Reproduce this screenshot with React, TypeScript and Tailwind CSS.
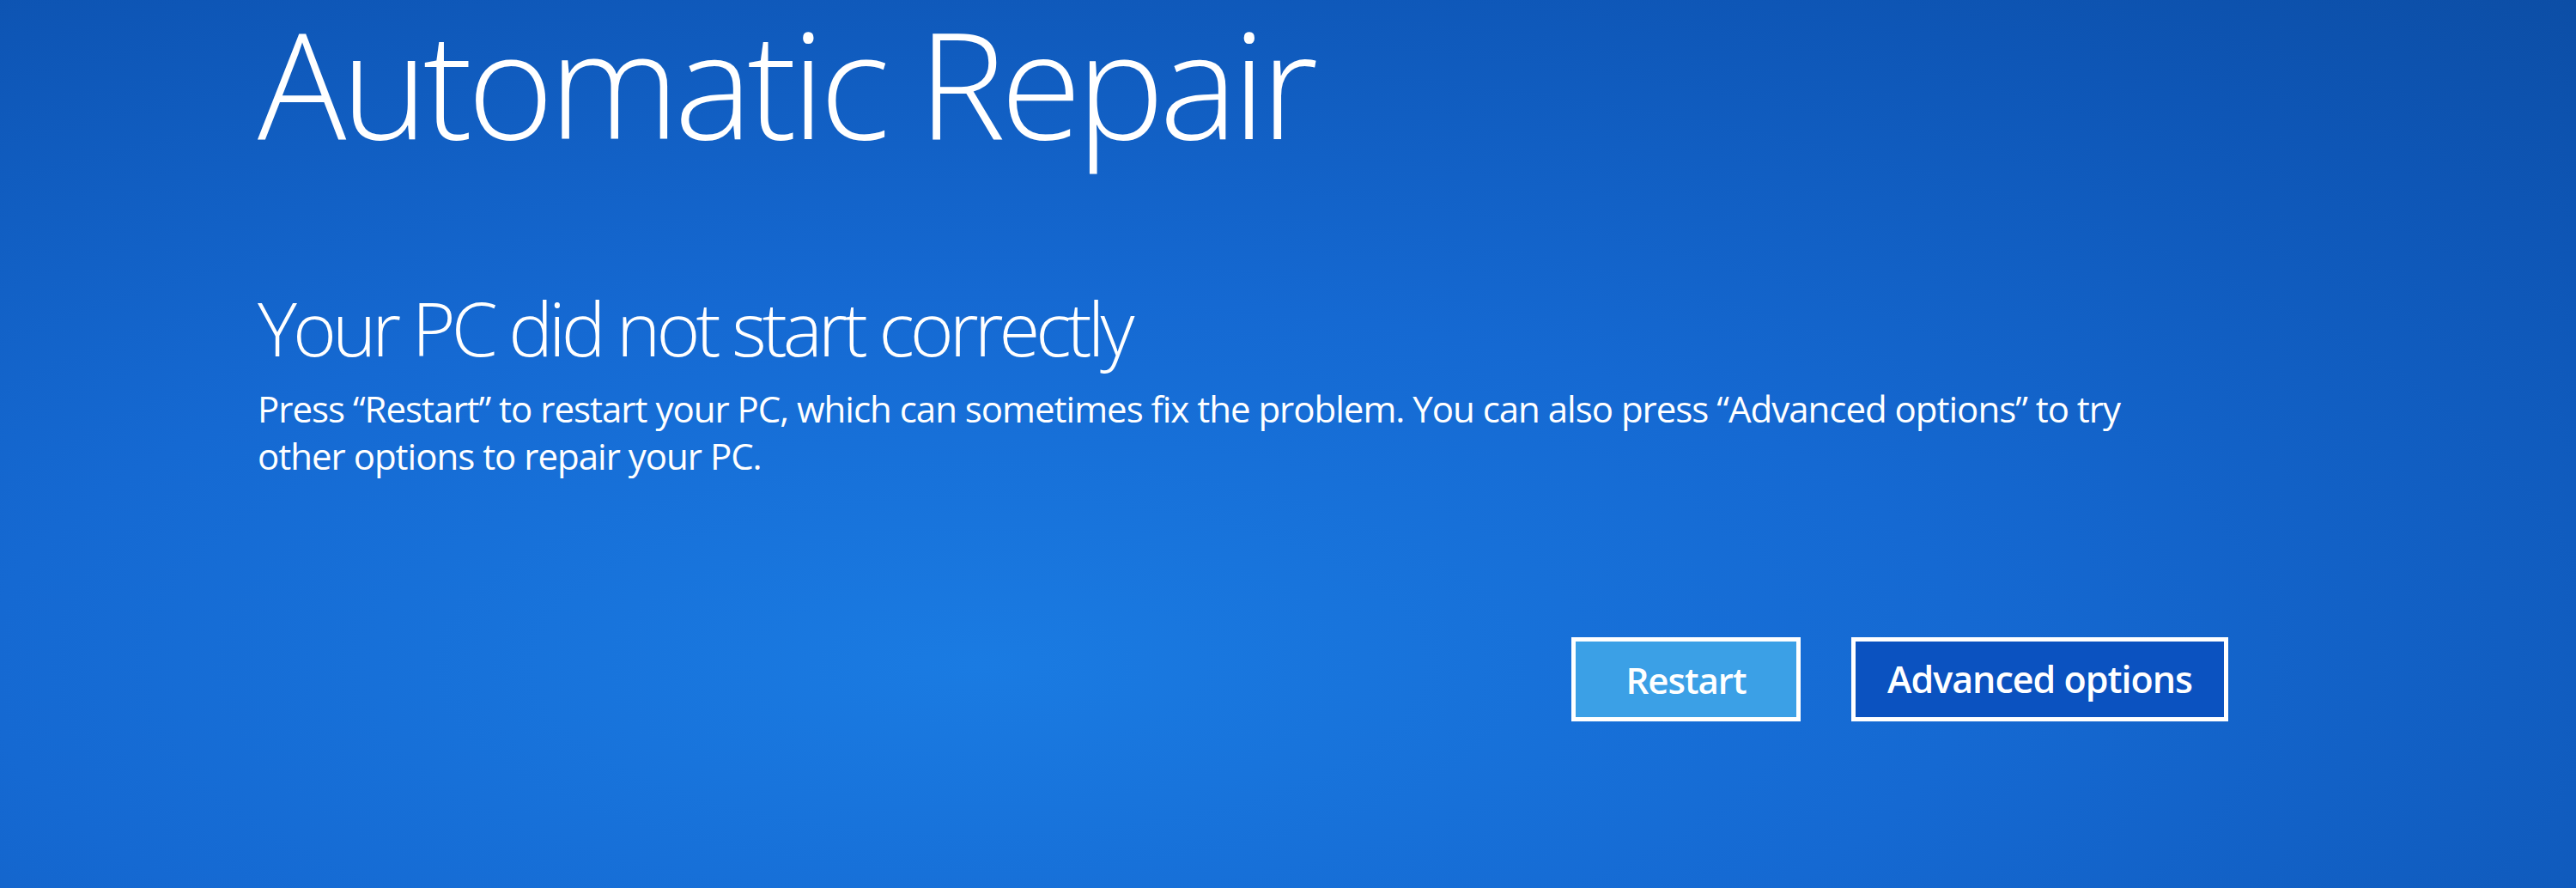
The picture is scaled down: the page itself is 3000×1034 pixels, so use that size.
export default function App() {
  return (
    <div className="relative w-[3000px] h-[1034px] overflow-hidden bg-[#0f5fc6] bg-[radial-gradient(ellipse_110%_120%_at_38%_75%,#1a7be2_0%,#1569d2_35%,#0e56b6_68%,#0a4696_100%)] font-['Segoe_UI','Open_Sans',sans-serif] text-white">
      <div className="pl-[300px] pr-[400px] pt-[1px]">
        <h1 className="text-[172px] font-light leading-[1.1] tracking-[-6px]">
          Automatic Repair
        </h1>

        <h2 className="mt-[141px] text-[87px] font-light leading-[1.15] tracking-[-5px]">
          Your PC did not start correctly
        </h2>

        <p className="mt-[17px] w-[2240px] text-[42px] leading-[55px] tracking-[-1px]">
          Press “Restart” to restart your PC, which can sometimes fix the problem. You can also press “Advanced options” to try other options to repair your PC.
        </p>

        <div className="mt-[184px] flex justify-end gap-[59px] w-[2295px]">
          <button className="w-[267px] h-[98px] border-[5px] border-white bg-[#3ba0e6] text-[42px] font-semibold tracking-[-1px]">
            Restart
          </button>
          <button className="w-[439px] h-[98px] border-[5px] border-white bg-[#0b52c0] text-[43px] font-semibold tracking-[-1px]">
            Advanced options
          </button>
        </div>
      </div>
    </div>
  );
}
